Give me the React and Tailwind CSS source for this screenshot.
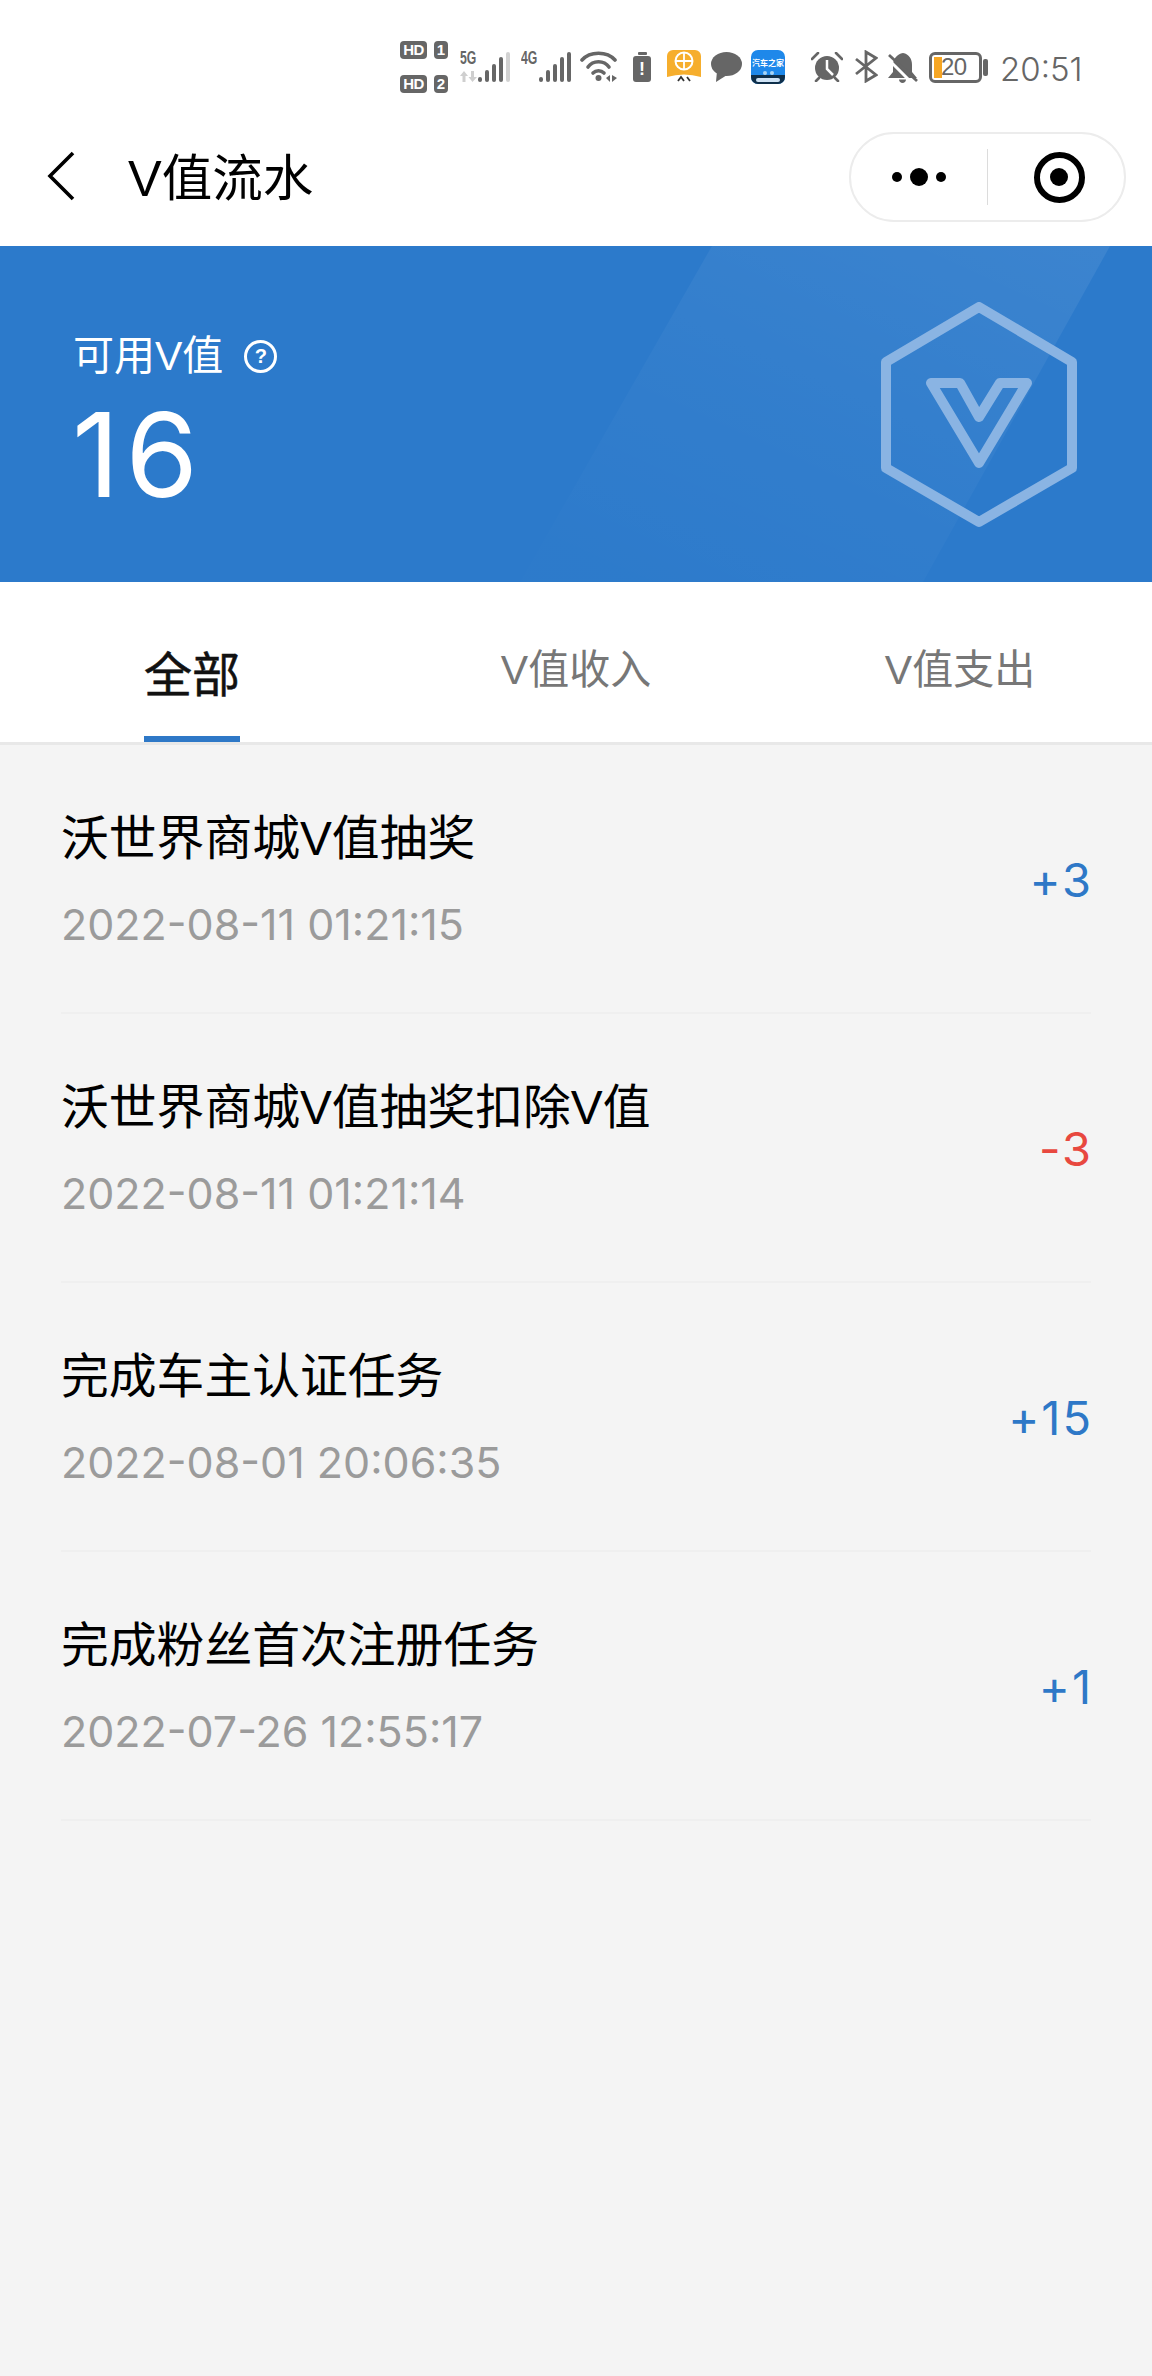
import React from "react";

const cjk = { fontFamily: '"Liberation Sans","Noto Sans CJK SC",sans-serif' };
const inter = { fontFamily: 'Inter,"Noto Sans CJK SC",sans-serif' };

const rows = [
  { t: "沃世界商城V值抽奖", d: "2022-08-11 01:21:15", v: "+3", c: "text-[#2e78c7]" },
  { t: "沃世界商城V值抽奖扣除V值", d: "2022-08-11 01:21:14", v: "-3", c: "text-[#e8483f]" },
  { t: "完成车主认证任务", d: "2022-08-01 20:06:35", v: "+15", c: "text-[#2e78c7]" },
  { t: "完成粉丝首次注册任务", d: "2022-07-26 12:55:17", v: "+1", c: "text-[#2e78c7]" },
];

function Bars({ light }) {
  const hs = [5, 12, 18, 25, 30];
  return (
    <div className="flex items-end gap-[3px] h-[30px]">
      {hs.map((h, i) => (
        <div key={i} className="w-[4px] rounded-[2px]" style={{ height: h, background: light && i === 4 ? "#d2d2d2" : "#666" }} />
      ))}
    </div>
  );
}

function Sim({ n }) {
  return (
    <div className="flex items-center gap-[7px] h-[18px]">
      <span className="h-[18px] w-[27px] rounded-[4px] bg-[#666] text-white text-[15px] font-bold leading-[18px] text-center tracking-[-0.5px]">HD</span>
      <span className="h-[18px] w-[14px] rounded-[4px] bg-[#666] text-white text-[15px] font-bold leading-[18px] text-center">{n}</span>
    </div>
  );
}

function StatusBar() {
  return (
    <div className="h-[88px] flex items-start">
      <div className="ml-[400px] mt-[41px] flex flex-col gap-[16px] w-[48px]">
        <Sim n="1" />
        <Sim n="2" />
      </div>
      <div className="ml-[12px] mt-[50px] relative w-[50px] h-[32px]">
        <span className="absolute left-0 top-0 text-[18px] font-bold text-[#666] leading-[16px] scale-x-[0.68] origin-left">5G</span>
        <svg className="absolute left-0 bottom-0" width="17" height="11" viewBox="0 0 17 11" fill="#cfcfcf">
          <path d="M4 0 L8 5 H5.500 V11 H2.500 V5 H0 Z" />
          <path d="M11 0 H14 V6 H17 L12.500 11 L8.500 6 H11 Z" />
        </svg>
        <div className="absolute right-0 bottom-0"><Bars light /></div>
      </div>
      <div className="ml-[11px] mt-[50px] relative w-[50px] h-[32px]">
        <span className="absolute left-0 top-0 text-[18px] font-bold text-[#666] leading-[16px] scale-x-[0.68] origin-left">4G</span>
        <div className="absolute right-0 bottom-0"><Bars /></div>
      </div>
      <svg className="ml-[9px] mt-[51px]" width="38" height="32" viewBox="0 0 38 32" fill="none" stroke="#666" strokeWidth="3.600" strokeLinecap="round">
        <path d="M2 9 C10 0 27 0 35 9" />
        <path d="M8 16 C13 9 24 9 29 16" />
        <circle cx="18.500" cy="27" r="3" fill="#666" stroke="none" />
        <path d="M13 22 C16 19 21 19 24 22" />
        <path d="M26 27 L30 24 V31 Z M32 24 L37 27 L32 31 Z" fill="#666" stroke="none" />
      </svg>
      <div className="ml-[15px] mt-[52px] w-[18px] flex flex-col items-center">
        <div className="w-[9px] h-[3px] rounded-[1px] bg-[#666]" />
        <div className="w-[18px] h-[26px] mt-[1px] rounded-[3px] bg-[#666] flex items-center justify-center text-white text-[18px] font-bold leading-none">!</div>
      </div>
      <svg className="ml-[16px] mt-[50px]" width="34" height="33" viewBox="0 0 34 33">
        <path d="M0 6 a6 6 0 0 1 6 -6 H28 a6 6 0 0 1 6 6 V27 Q17 22 0 27 Z" fill="#f6ae2d" />
        <circle cx="17" cy="11" r="8.500" fill="none" stroke="#fff" strokeWidth="2" />
        <path d="M8.500 11 H25.500 M17 2.500 V19.500" stroke="#fff" strokeWidth="1.800" />
        <path d="M11 31 L14 27 L17 31 M20 27 L23 31" stroke="#333" strokeWidth="1.800" fill="none" />
      </svg>
      <svg className="ml-[10px] mt-[52px]" width="31" height="30" viewBox="0 0 31 30" fill="#666">
        <ellipse cx="15.500" cy="12" rx="15.500" ry="12" />
        <path d="M6 19 L5 30 L16 23 Z" />
      </svg>
      <div className="ml-[9px] mt-[50px] w-[34px] h-[34px] rounded-[7px] bg-[#1e88ea] overflow-hidden flex flex-col items-center">
        <div className="mt-[9px] text-white text-[8px] font-bold leading-[9px] whitespace-nowrap">汽车之家</div>
        <div className="mt-[3px] flex gap-[3px]">
          <span className="w-[4px] h-[4px] rounded-full bg-[#a8d4f5]" />
          <span className="w-[4px] h-[4px] rounded-full bg-[#a8d4f5]" />
        </div>
        <div className="w-full flex-1 bg-[#0f2f4a] flex items-center justify-center">
          <span className="w-[24px] h-[4px] rounded-full bg-[#cfe3f5]" />
        </div>
      </div>
      <svg className="ml-[26px] mt-[52px]" width="32" height="30" viewBox="0 0 32 30">
        <circle cx="16" cy="16" r="12" fill="#666" />
        <path d="M16 8 V17 L22 23" stroke="#fff" strokeWidth="2.500" fill="none" />
        <path d="M1 7 L7 1 M31 7 L25 1 M5 29 L8 26 M27 29 L24 26" stroke="#666" strokeWidth="2.600" strokeLinecap="round" />
      </svg>
      <svg className="ml-[11px] mt-[50px]" width="24" height="33" viewBox="0 0 24 33" fill="none" stroke="#666" strokeWidth="2.800">
        <path d="M2 9 L22 25 L12 31 V2 L22 8 L2 24" />
      </svg>
      <svg className="ml-[10px] mt-[52px]" width="30" height="31" viewBox="0 0 30 31">
        <path d="M15 1 C21 2 24 7 24 13 V20 L29 26 H0 L5 20 V13 C5 7 9 2 15 1 Z" fill="#666" />
        <path d="M11 27.500 H18 C18 32 11 32 11 27.500 Z" fill="#666" />
        <path d="M-1 0 L29 30" stroke="#fff" strokeWidth="3" transform="translate(-3 3)" />
        <path d="M1 3 L29 29" stroke="#666" strokeWidth="2.800" />
      </svg>
      <div className="ml-[11px] mt-[52px] relative w-[53px] h-[31px] rounded-[6px] border-[3px] border-[#666]">
        <div className="absolute left-[2px] top-[2px] bottom-[2px] w-[8px] bg-[#f6a623]" />
        <span className="absolute left-[9px] top-[-1px] text-[24px] leading-[26px] text-[#666] tracking-[-0.5px]" style={cjk}>20</span>
      </div>
      <div className="ml-[1px] mt-[59px] w-[5px] h-[17px] rounded-[2px] bg-[#666]" />
      <span className="ml-[12px] mt-[50px] text-[33px] leading-[38px] text-[#666] font-light" style={inter}>20:51</span>
    </div>
  );
}

function NavBar() {
  return (
    <div className="h-[160px] -mt-[2px] flex items-start bg-white">
      <svg className="ml-[46px] mt-[62px]" width="32" height="56" viewBox="0 0 32 56" fill="none" stroke="#000" strokeWidth="3.600">
        <path d="M27 5 L4 28 L27 51" />
      </svg>
      <span className="ml-[50px] mt-[60px] text-[50.5px] leading-[66px] text-black whitespace-nowrap" style={cjk}>V值流水</span>
      <div className="ml-auto mr-[26px] mt-[46px] w-[277px] h-[90px] rounded-full border-2 border-[#ececec] flex items-center">
        <div className="w-[136px] flex items-center justify-center gap-[8px]">
          <span className="w-[10px] h-[10px] rounded-full bg-black" />
          <span className="w-[18px] h-[18px] rounded-full bg-black" />
          <span className="w-[10px] h-[10px] rounded-full bg-black" />
        </div>
        <div className="w-px h-[56px] bg-[#dcdcdc]" />
        <div className="flex-1 flex items-center justify-center pl-[6px]">
          <div className="w-[51px] h-[51px] rounded-full border-[6px] border-black flex items-center justify-center">
            <span className="w-[18px] h-[18px] rounded-full bg-black" />
          </div>
        </div>
      </div>
    </div>
  );
}

function Banner() {
  return (
    <div className="relative h-[336px] bg-[#2c7acb] overflow-hidden">
      <svg className="absolute inset-0" width="1152" height="336" viewBox="0 0 1152 336">
        <defs>
          <linearGradient id="shine" x1="0.95" y1="0" x2="0.15" y2="1">
            <stop offset="0" stopColor="#fff" stopOpacity="0.075" />
            <stop offset="0.55" stopColor="#fff" stopOpacity="0.03" />
            <stop offset="1" stopColor="#fff" stopOpacity="0.005" />
          </linearGradient>
        </defs>
        <polygon points="712,0 1110,0 923,336 520,336" fill="url(#shine)" />
      </svg>
      <svg className="absolute left-[880px] top-[56px]" width="200" height="226" viewBox="0 0 200 226" fill="none" stroke="#8ab4e3" strokeWidth="10" strokeLinejoin="round">
        <polygon points="99,5 192,60 192,166 99,220 6,166 6,60" />
        <polygon points="51,81 80,81 99,115 120,81 147,81 99,161" />
      </svg>
      <div className="relative pl-[73px] pt-[88px]">
        <div className="flex items-center h-[44px]">
          <span className="text-[41px] leading-[44px] text-white whitespace-nowrap" style={cjk}>可用V值</span>
          <span className="ml-[21px] w-[33px] h-[33px] rounded-full border-[3px] border-white text-white text-[20px] font-bold leading-none flex items-center justify-center" style={cjk}>?</span>
        </div>
        <div className="-ml-[1px] mt-[17px] text-[117px] leading-[120px] text-white tracking-[6px]" style={inter}>16</div>
      </div>
    </div>
  );
}

function Tabs() {
  const cls = "text-[41px] leading-[56px] text-[#777] whitespace-nowrap";
  return (
    <div className="h-[163px] bg-white border-b-[3px] border-[#e8e8e8] grid grid-cols-3">
      <div className="flex flex-col items-center">
        <div className="mt-[62px] w-[96px] flex flex-col items-center h-[98px]">
          <span className="text-[48px] leading-[64px] text-[#111] whitespace-nowrap [-webkit-text-stroke:0.5px_#111]" style={cjk}>全部</span>
          <div className="mt-auto w-full h-[6px] bg-[#2e78c7]" />
        </div>
      </div>
      <div className="flex justify-center pt-[60px]"><span className={cls} style={cjk}>V值收入</span></div>
      <div className="flex justify-center pt-[60px]"><span className={cls} style={cjk}>V值支出</span></div>
    </div>
  );
}

export default function App() {
  return (
    <div className="w-[1152px] h-[2376px] bg-[#f4f4f4] overflow-hidden" style={cjk}>
      <div className="bg-white">
        <StatusBar />
        <NavBar />
      </div>
      <Banner />
      <Tabs />
      <div className="px-[61px]">
        {rows.map((r, i) => (
          <div key={i} className="h-[269px] border-b-2 border-[#efefef] flex items-center justify-between">
            <div className="-mt-[3px]">
              <div className="text-[47.8px] leading-[64px] text-black whitespace-nowrap">{r.t}</div>
              <div className="mt-[29px] text-[43px] leading-[48px] text-[#9b9b9b] whitespace-nowrap" style={inter}>{r.d}</div>
            </div>
            <div className={`mt-[2px] -mr-[2px] text-[47px] leading-[52px] tracking-[2px] ${r.c}`} style={inter}>{r.v}</div>
          </div>
        ))}
      </div>
    </div>
  );
}
